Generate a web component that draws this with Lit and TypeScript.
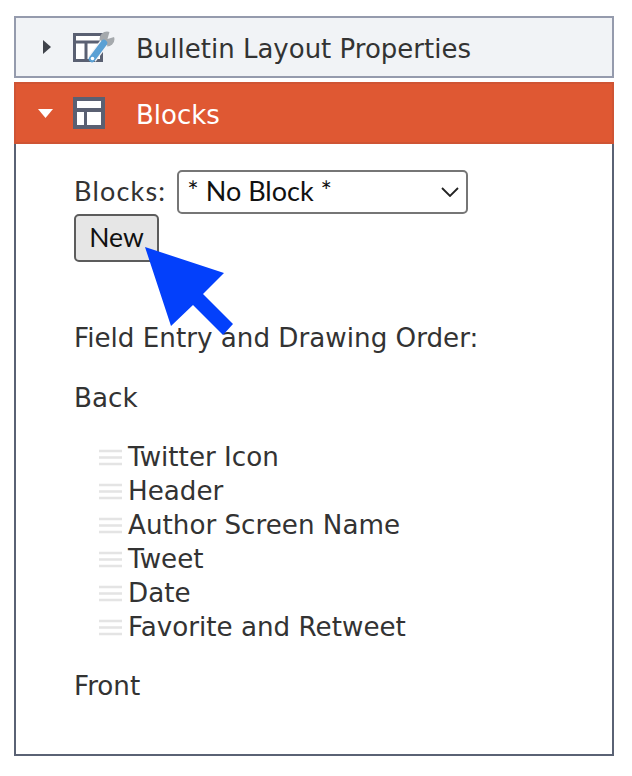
import { LitElement, html, css } from 'lit';
import { customElement } from 'lit/decorators.js';

const FIELDS = ['Twitter Icon', 'Header', 'Author Screen Name', 'Tweet', 'Date', 'Favorite and Retweet'];

@customElement('app-root')
export class AppRoot extends LitElement {
  static styles = css`
    :host {
      display: block;
      height: 776px;
      background: #fff;
      box-sizing: border-box;
      padding: 16px 18px 0 14px;
      font-family: 'DejaVu Sans', Verdana, sans-serif;
      color: #333;
      overflow: hidden;
    }
    .panel {
      display: flex;
      align-items: center;
      box-sizing: border-box;
      height: 62px;
      border: 2px solid #959bad;
      background: #f1f3f6;
      font-size: 26px;
      color: #333;
    }
    .panel.active {
      margin-top: 4px;
      border-color: #cf5434;
      background: #df5833;
      color: #fff;
    }
    .tri { width: 10px; margin-left: 26px; display: flex; }
    .active .tri { margin-left: 22px; width: 15px; }
    .ico { margin-left: 21px; width: 42px; height: 32px; display: block; }
    .active .ico { margin-left: 20px; width: 32px; }
    .title { margin-left: 21px; padding-top: 4px; }
    .active .title { margin-left: 31px; }
    .body {
      position: relative;
      box-sizing: border-box;
      height: 612px;
      border: 2px solid #5a6274;
      border-top: 0;
      padding: 26px 0 0 58px;
      font-size: 26.2px;
      line-height: 34px;
    }
    .row { display: flex; align-items: center; gap: 11px; height: 44px; }
    .lbl { font-family: Lato, sans-serif; font-size: 27px; letter-spacing: 1.2px; padding-bottom: 3px; }
    .select {
      box-sizing: border-box;
      width: 291px;
      height: 44px;
      border: 2px solid #767676;
      border-radius: 5px;
      display: flex;
      align-items: center;
      justify-content: space-between;
      padding: 0 7px 3px 8px;
      font-family: Lato, sans-serif;
      font-size: 27px;
      color: #111;
    }
    .select svg { margin-top: 3px; }
    .btn {
      display: flex;
      align-items: center;
      justify-content: center;
      box-sizing: border-box;
      width: 85px;
      height: 48px;
      padding-bottom: 3px;
      border: 2px solid #5c5c5c;
      border-radius: 5px;
      background: #e6e6e6;
      font-family: Lato, sans-serif;
      font-size: 26.5px;
      color: #111;
    }
    .order { margin: 59px 0 0; }
    .back { margin: 26px 0 0; }
    .list { margin: 25px 0 0; padding: 0 0 0 25px; list-style: none; }
    .list li { display: flex; align-items: center; gap: 6px; height: 34px; }
    .grip { width: 23px; height: 17px; display: block; flex: none; }
    .front { margin: 25px 0 0; }
    .arrow { position: absolute; left: 124px; top: 96px; width: 100px; height: 100px; }
  `;

  render() {
    return html`
      <div class="panel">
        <span class="tri">
          <svg width="10" height="16" viewBox="0 0 10 16"><path d="M1 1l8 7-8 7z" fill="#3f434b"/></svg>
        </span>
        <svg class="ico" viewBox="0 0 42 32">
          <path d="M1.500 3.500h27v26h-27z" fill="#fff" stroke="#5a6072" stroke-width="3"/>
          <path d="M1.500 11h27M13 11v19" stroke="#5a6072" stroke-width="3" fill="none"/>
          <circle cx="34" cy="8" r="7.500" fill="#a5a9ad"/>
          <path d="M34.500 8L37 -1 45 -1 45 5Z" fill="#f1f3f6"/>
          <path d="M19 28L31 12" stroke="#f1f3f6" stroke-width="9" fill="none"/>
          <path d="M19 28L31 12" stroke="#5aa0d4" stroke-width="6.500" stroke-linecap="round" fill="none"/>
          <circle cx="19.500" cy="27.500" r="1.800" fill="#fff"/>
        </svg>
        <span class="title">Bulletin Layout Properties</span>
      </div>
      <div class="panel active">
        <span class="tri">
          <svg width="15" height="9" viewBox="0 0 15 9"><path d="M0 0h15L7.500 9z" fill="#fff"/></svg>
        </span>
        <svg class="ico" viewBox="0 0 32 32">
          <path d="M0 0h32v32H0z" fill="#5a6072"/>
          <path d="M4 4h24v7H4zM4 15h7v13H4zM14 15h14v13H14z" fill="#fff"/>
        </svg>
        <span class="title">Blocks</span>
      </div>
      <div class="body">
        <div class="row">
          <span class="lbl">Blocks:</span>
          <div class="select">
            <span>* No Block *</span>
            <svg width="18" height="10" viewBox="0 0 18 10"><path d="M1 1l8 8 8-8" fill="none" stroke="#222" stroke-width="1.800"/></svg>
          </div>
        </div>
        <div class="btn">New</div>
        <p class="order">Field Entry and Drawing Order:</p>
        <p class="back">Back</p>
        <ul class="list">
          ${FIELDS.map(f => html`<li>
            <svg class="grip" viewBox="0 0 23 17"><path d="M0 2h23M0 8.500h23M0 15h23" stroke="#e4e4e4" stroke-width="2.500"/></svg>
            <span>${f}</span>
          </li>`)}
        </ul>
        <p class="front">Front</p>
        <svg class="arrow" viewBox="0 0 100 100">
          <path d="M5 7L84 33 63 54 93 84 83 95 53 65 31 86Z" fill="#0340fb"/>
        </svg>
      </div>
    `;
  }
}
